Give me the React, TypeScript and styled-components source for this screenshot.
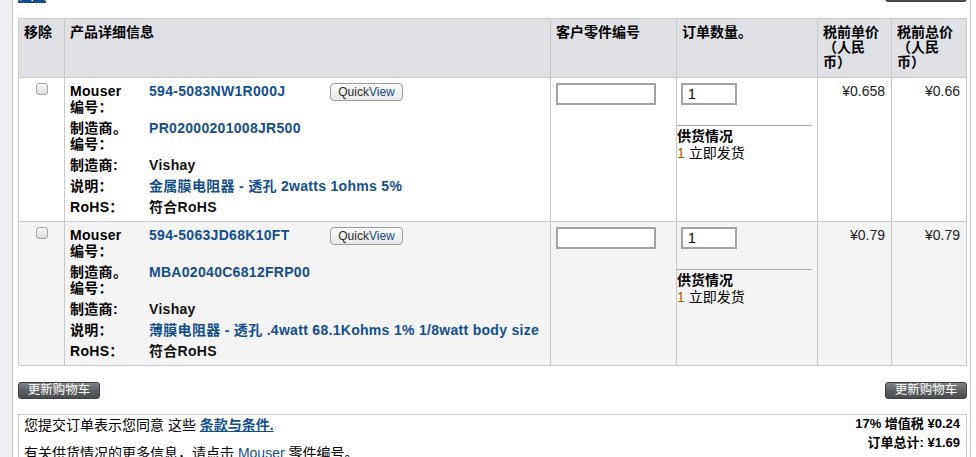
import React from 'react'
import styled, { createGlobalStyle } from 'styled-components'

const FONT = `"Liberation Sans", Arial, "Noto Sans CJK SC", sans-serif`
const LINE = '#c9c9c9'
const BLUE = '#134f8c'

const GlobalStyle = createGlobalStyle`
  html, body {
    margin: 0;
    padding: 0;
    background: #fff;
  }
  body {
    font-family: ${FONT};
    font-size: 14px;
    color: #000;
  }
`

const Shell = styled.div`
  display: flex;
  width: 976px;
  height: 457px;
  overflow: hidden;
`

const Rail = styled.div`
  flex: none;
  width: 12px;
  background: #eef0f3;
  border-right: 1px solid #c6c9cd;
`

const Main = styled.div`
  flex: none;
  box-sizing: border-box;
  width: 958px;
  padding: 0 3px 0 5px;
  border-right: 1px solid #c6c9cd;
`

// toolbar that is mostly scrolled off above the viewport
const TopBar = styled.div`
  display: flex;
  justify-content: space-between;
  align-items: flex-end;
  height: 17px;
  margin: -15px 0 16px;
`

const TopLink = styled.a`
  color: ${BLUE};
  font-weight: bold;
  line-height: 13px;
  text-decoration: underline;
  text-decoration-thickness: 2px;
`

const UpdateButton = styled.button`
  box-sizing: border-box;
  width: 82px;
  height: 17px;
  padding: 0;
  border: 1px solid #3e4143;
  border-radius: 3px;
  background: linear-gradient(#808385, #5d6062 50%, #4a4d4f);
  color: #fff;
  font-family: ${FONT};
  font-size: 12.5px;
  line-height: 15px;
  cursor: pointer;
`

const Table = styled.div`
  box-sizing: border-box;
  width: 949px;
  border-top: 1px solid ${LINE};
  border-left: 1px solid ${LINE};
`

const Row = styled.div<{ $head?: boolean; $alt?: boolean }>`
  display: grid;
  grid-template-columns: 46px 486px 126px 141px 74px 75px;
  height: ${({ $head }) => ($head ? 59 : 144)}px;
  background: ${({ $head, $alt }) => ($head ? '#dfe1e5' : $alt ? '#f4f4f4' : '#fff')};
`

const Cell = styled.div`
  box-sizing: border-box;
  border-right: 1px solid ${LINE};
  border-bottom: 1px solid ${LINE};
  min-width: 0;
`

const HeadCell = styled(Cell)`
  padding: 6px 5px 0;
  font-weight: bold;
  line-height: 15px;
`

const CheckCell = styled(Cell)`
  display: flex;
  justify-content: center;
  align-items: flex-start;
  padding-top: 5px;
`

const Check = styled.input`
  appearance: none;
  box-sizing: border-box;
  width: 12px;
  height: 12px;
  margin: 0;
  border: 1px solid #a4a4a4;
  border-radius: 3px;
  background: linear-gradient(#f7f7f7, #dcdcdc);
`

const DetailCell = styled(Cell)`
  padding: 3px 5px;
`

const DetailGrid = styled.div`
  display: grid;
  grid-template-columns: 79px 1fr;
  line-height: 16px;
  font-weight: bold;
  letter-spacing: 0.3px;
`

const Label = styled.div`
  padding: 2px 0 3px;
`

const Value = styled.div<{ $plain?: boolean }>`
  display: flex;
  align-items: flex-start;
  padding: 2px 0 3px;
  color: ${({ $plain }) => ($plain ? '#111' : BLUE)};
  white-space: nowrap;
`

const PartNo = styled.span`
  width: 181px;
`

const QuickView = styled.button`
  box-sizing: border-box;
  width: 73px;
  height: 18px;
  padding: 0;
  border: 1px solid #9c9c9c;
  border-radius: 4px;
  background: linear-gradient(#fbfbfb, #e9e9e9);
  font-family: ${FONT};
  font-size: 12px;
  line-height: 16px;
  letter-spacing: 0;
  color: #2a2a2a;

  span {
    color: ${BLUE};
  }
`

const InputCell = styled(Cell)`
  padding: 5px 5px 0 5px;
`

const TextBox = styled.input<{ $w: number }>`
  box-sizing: border-box;
  width: ${({ $w }) => $w}px;
  height: 22px;
  margin: 0;
  padding: 0 5px;
  border: 2px solid #a3a3a3;
  background: #fff;
  font-family: ${FONT};
  font-size: 14px;
  color: #000;
`

const QtyCell = styled(Cell)`
  padding: 5px 5px 0 0;
  line-height: 17px;
`

const QtyBox = styled(TextBox)`
  margin-left: 4px;
`

const Rule = styled.div`
  height: 1px;
  margin: 20px 0 2px;
  background: #a9a9a9;
`

const StockTitle = styled.div`
  font-weight: bold;
`

const StockCount = styled.span`
  color: #a65a00;
`

const PriceCell = styled(Cell)`
  padding: 5px 6px 0;
  text-align: right;
  line-height: 16px;
  color: #222;
`

const ButtonRow = styled.div`
  display: flex;
  justify-content: space-between;
  width: 949px;
  margin: 16px 0 15px;
`

const Summary = styled.div`
  display: flex;
  justify-content: space-between;
  box-sizing: border-box;
  width: 949px;
  height: 60px;
  padding: 1px 6px 0 5px;
  border: 1px solid ${LINE};
  border-bottom: none;
`

const Notes = styled.div`
  line-height: 16px;
  padding-top: 1px;

  p {
    margin: 0 0 12px;
  }
`

const TermsLink = styled.a`
  color: ${BLUE};
  font-weight: bold;
  text-decoration: underline;
`

const MouserWord = styled.span`
  color: ${BLUE};
`

const Totals = styled.div`
  display: flex;
  flex-direction: column;
  align-items: flex-end;
  gap: 3px;
  font-size: 13px;
  font-weight: bold;
  line-height: 16px;
`

type Item = {
  mouser: string
  mfr: string
  desc: string
  unit: string
  total: string
}

const items: Item[] = [
  {
    mouser: '594-5083NW1R000J',
    mfr: 'PR02000201008JR500',
    desc: '金属膜电阻器 - 透孔 2watts 1ohms 5%',
    unit: '¥0.658',
    total: '¥0.66',
  },
  {
    mouser: '594-5063JD68K10FT',
    mfr: 'MBA02040C6812FRP00',
    desc: '薄膜电阻器 - 透孔 .4watt 68.1Kohms 1% 1/8watt body size',
    unit: '¥0.79',
    total: '¥0.79',
  },
]

const CartRow = ({ item, alt }: { item: Item; alt?: boolean }) => (
  <Row $alt={alt}>
    <CheckCell>
      <Check type="checkbox" />
    </CheckCell>
    <DetailCell>
      <DetailGrid>
        <Label>
          Mouser
          <br />
          编号：
        </Label>
        <Value>
          <PartNo>{item.mouser}</PartNo>
          <QuickView>
            Quick<span>View</span>
          </QuickView>
        </Value>
        <Label>
          制造商。
          <br />
          编号：
        </Label>
        <Value>{item.mfr}</Value>
        <Label>制造商:</Label>
        <Value $plain>Vishay</Value>
        <Label>说明：</Label>
        <Value>{item.desc}</Value>
        <Label>RoHS：</Label>
        <Value $plain>符合RoHS</Value>
      </DetailGrid>
    </DetailCell>
    <InputCell>
      <TextBox $w={100} defaultValue="" />
    </InputCell>
    <QtyCell>
      <QtyBox $w={56} defaultValue="1" />
      <Rule />
      <StockTitle>供货情况</StockTitle>
      <div>
        <StockCount>1</StockCount> 立即发货
      </div>
    </QtyCell>
    <PriceCell>{item.unit}</PriceCell>
    <PriceCell>{item.total}</PriceCell>
  </Row>
)

export default function App() {
  return (
    <>
      <GlobalStyle />
      <Shell>
        <Rail />
        <Main>
          <TopBar>
            <TopLink href="#">返回</TopLink>
            <UpdateButton>更新购物车</UpdateButton>
          </TopBar>

          <Table>
            <Row $head>
              <HeadCell>移除</HeadCell>
              <HeadCell>产品详细信息</HeadCell>
              <HeadCell>客户零件编号</HeadCell>
              <HeadCell>订单数量。</HeadCell>
              <HeadCell>
                税前单价
                <br />
                （人民
                <br />
                币）
              </HeadCell>
              <HeadCell>
                税前总价
                <br />
                （人民
                <br />
                币）
              </HeadCell>
            </Row>
            {items.map((item, i) => (
              <CartRow key={item.mouser} item={item} alt={i % 2 === 1} />
            ))}
          </Table>

          <ButtonRow>
            <UpdateButton>更新购物车</UpdateButton>
            <UpdateButton>更新购物车</UpdateButton>
          </ButtonRow>

          <Summary>
            <Notes>
              <p>
                您提交订单表示您同意 这些 <TermsLink href="#">条款与条件.</TermsLink>
              </p>
              <p>
                有关供货情况的更多信息，请点击 <MouserWord>Mouser</MouserWord> 零件编号。
              </p>
            </Notes>
            <Totals>
              <div>17% 增值税 ¥0.24</div>
              <div>订单总计: ¥1.69</div>
            </Totals>
          </Summary>
        </Main>
      </Shell>
    </>
  )
}
